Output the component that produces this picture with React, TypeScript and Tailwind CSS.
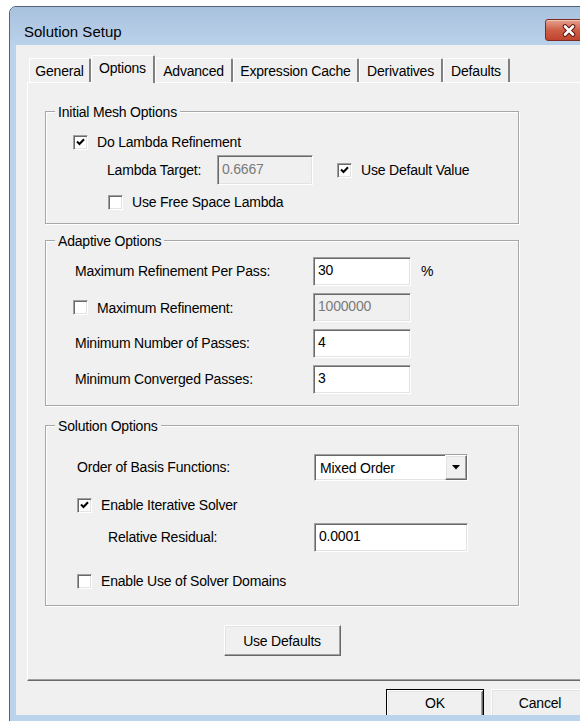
import React from "react";

// classic 3D edges
const sunken =
  "border border-t-[#a0a0a0] border-l-[#a0a0a0] border-r-white border-b-white shadow-[inset_1px_1px_0_#696969,inset_-1px_-1px_0_#e3e3e3]";
const raised =
  "border border-t-white border-l-white border-r-[#696969] border-b-[#696969] shadow-[inset_-1px_-1px_0_#a0a0a0,inset_1px_1px_0_#e3e3e3] bg-[#f0f0f0]";
const etched =
  "border border-[#a7a7a7] shadow-[inset_1px_1px_0_#fff,1px_1px_0_#fff]";

function CheckBox({ checked }: { checked?: boolean }) {
  return (
    <span className={`w-[15px] h-[15px] shrink-0 bg-white flex items-center justify-center ${sunken}`}>
      {checked && (
        <svg width="9" height="8" viewBox="0 0 9 8">
          <polyline points="1,3.5 3.5,6 8,1.2" fill="none" stroke="#000" strokeWidth="2" />
        </svg>
      )}
    </span>
  );
}

function Check({ label, checked }: { label: string; checked?: boolean }) {
  return (
    <div className="flex items-center gap-[9px] h-[16px] leading-[16px]">
      <CheckBox checked={checked} />
      <span>{label}</span>
    </div>
  );
}

function TextBox({ value, disabled, className }: { value: string; disabled?: boolean; className: string }) {
  return (
    <div
      className={`${className} ${sunken} flex items-center pl-[4px] pb-[3px] leading-[16px] ${
        disabled ? "bg-[#f0f0f0] text-[#7a7a7a]" : "bg-white text-black"
      }`}
    >
      {value}
    </div>
  );
}

function Group({ title, className, children }: { title: string; className: string; children: React.ReactNode }) {
  return (
    <div className={`relative flex flex-col ${etched} ${className}`}>
      <span className="absolute left-[9px] -top-[8px] px-[3px] bg-[#f0f0f0] leading-[16px]">{title}</span>
      {children}
    </div>
  );
}

const TABS = [
  { label: "General", w: "w-[62px]" },
  { label: "Options", w: "w-[64px]", active: true },
  { label: "Advanced", w: "w-[78px]" },
  { label: "Expression Cache", w: "w-[126px]" },
  { label: "Derivatives", w: "w-[84px]" },
  { label: "Defaults", w: "w-[67px]" },
];

export default function App() {
  return (
    <div className="w-[580px] h-[721px] overflow-hidden bg-white pt-[6px] pl-[9px] font-['Liberation_Sans',Arial,sans-serif] text-[14px] tracking-[-0.2px] text-black">
      <div className="w-[590px] h-[730px] rounded-t-[7px] border border-[#52647a] bg-[#bcd3ec] flex flex-col">
        {/* Title bar */}
        <div className="h-[38px] shrink-0 flex items-start rounded-t-[6px] bg-linear-to-b from-[#a8c1dd] to-[#bad1ea]">
          <span className="pl-[14px] pt-[16px] text-[15px] leading-[18px] tracking-normal">Solution Setup</span>
          <div className="ml-auto mr-[6px] mt-[12px] w-[47px] h-[22px] shrink-0 rounded-[3px] border border-[#7a2c20] bg-linear-to-b from-[#e4a190] via-[#cf5f48] to-[#c0432e] shadow-[inset_0_1px_0_#f3c3b6] flex items-center justify-center">
            <svg width="16" height="13" viewBox="0 0 16 13">
              <path d="M4 2.5 L12 10.5 M12 2.5 L4 10.5" stroke="#5e1a10" strokeWidth="4.6" strokeLinecap="round" />
              <path d="M4 2.5 L12 10.5 M12 2.5 L4 10.5" stroke="#fff" strokeWidth="2.6" strokeLinecap="round" />
            </svg>
          </div>
        </div>

        {/* Client area */}
        <div className="mx-[6px] h-[670px] shrink-0 bg-[#f0f0f0] pl-[11px] pt-[10px] overflow-hidden flex flex-col">
          {/* Tab headers */}
          <div className="flex items-end h-[27px] pl-[2px] shrink-0">
            {TABS.map((t) =>
              t.active ? (
                <div
                  key={t.label}
                  className={`${t.w} h-[28px] -mb-[1px] relative z-10 bg-[#f0f0f0] border-t border-l border-t-white border-l-white border-r-2 border-r-[#808080] rounded-t-[2px] flex justify-center pt-[4px] leading-[16px]`}
                >
                  {t.label}
                </div>
              ) : (
                <div
                  key={t.label}
                  className={`${t.w} h-[24px] border-t border-l border-t-white border-l-white border-r-2 border-r-[#808080] rounded-t-[2px] flex justify-center items-center leading-[16px]`}
                >
                  {t.label}
                </div>
              )
            )}
          </div>

          {/* Options page */}
          <div className="h-[599px] w-[570px] shrink-0 border border-t-white border-l-white border-r-[#696969] border-b-[#696969] shadow-[inset_-1px_-1px_0_#a0a0a0] pl-[17px] pt-[28px]">
            <div className="w-[474px] flex flex-col">
              <Group title="Initial Mesh Options" className="h-[113px]">
                <div className="pt-[22px] pl-[27px]">
                  <Check label="Do Lambda Refinement" checked />
                </div>
                <div className="mt-[5px] h-[30px] flex items-center">
                  <span className="w-[171px] pl-[61px]">Lambda Target:</span>
                  <TextBox value="0.6667" disabled className="w-[96px] h-[30px]" />
                  <div className="ml-[24px]">
                    <Check label="Use Default Value" checked />
                  </div>
                </div>
                <div className="mt-[9px] pl-[62px]">
                  <Check label="Use Free Space Lambda" />
                </div>
              </Group>

              <Group title="Adaptive Options" className="mt-[16px] h-[166px] pt-[16px] gap-[7px]">
                <div className="h-[29px] flex items-center">
                  <span className="w-[267px] pl-[29px]">Maximum Refinement Per Pass:</span>
                  <TextBox value="30" className="w-[98px] h-[29px]" />
                  <span className="ml-[10px]">%</span>
                </div>
                <div className="h-[29px] flex items-center">
                  <div className="w-[267px] pl-[27px]">
                    <Check label="Maximum Refinement:" />
                  </div>
                  <TextBox value="1000000" disabled className="w-[98px] h-[29px]" />
                </div>
                <div className="h-[29px] flex items-center">
                  <span className="w-[267px] pl-[29px]">Minimum Number of Passes:</span>
                  <TextBox value="4" className="w-[98px] h-[29px]" />
                </div>
                <div className="h-[29px] flex items-center">
                  <span className="w-[267px] pl-[29px]">Minimum Converged Passes:</span>
                  <TextBox value="3" className="w-[98px] h-[29px]" />
                </div>
              </Group>

              <Group title="Solution Options" className="mt-[19px] h-[181px] pt-[28px]">
                <div className="h-[27px] flex items-center">
                  <span className="w-[268px] pl-[31px]">Order of Basis Functions:</span>
                  <div className={`w-[154px] h-[27px] bg-white flex items-center ${sunken}`}>
                    <span className="flex-1 pl-[5px] leading-[16px]">Mixed Order</span>
                    <div className={`w-[22px] h-full flex items-center justify-center ${raised}`}>
                      <svg width="8" height="5" viewBox="0 0 8 5">
                        <path d="M0 0 H8 L4 4.5 Z" fill="#000" />
                      </svg>
                    </div>
                  </div>
                </div>
                <div className="mt-[16px] pl-[31px]">
                  <Check label="Enable Iterative Solver" checked />
                </div>
                <div className="mt-[10px] h-[29px] flex items-center">
                  <span className="w-[268px] pl-[62px]">Relative Residual:</span>
                  <TextBox value="0.0001" className="w-[154px] h-[29px]" />
                </div>
                <div className="mt-[21px] pl-[31px]">
                  <Check label="Enable Use of Solver Domains" />
                </div>
              </Group>

              <button className={`mt-[19px] self-center w-[117px] h-[31px] leading-[16px] ${raised}`}>
                Use Defaults
              </button>
            </div>
          </div>

          {/* Dialog buttons */}
          <div className="mt-[8px] flex pl-[359px] shrink-0">
            <button className="w-[98px] h-[30px] border border-black bg-[#f0f0f0] shadow-[inset_1px_1px_0_#fff,inset_-1px_-1px_0_#696969,inset_2px_2px_0_#e3e3e3,inset_-2px_-2px_0_#a0a0a0] leading-[16px] pb-[2px]">
              OK
            </button>
            <button className={`ml-[7px] w-[98px] h-[30px] leading-[16px] pb-[2px] ${raised}`}>Cancel</button>
          </div>
        </div>
      </div>
    </div>
  );
}
